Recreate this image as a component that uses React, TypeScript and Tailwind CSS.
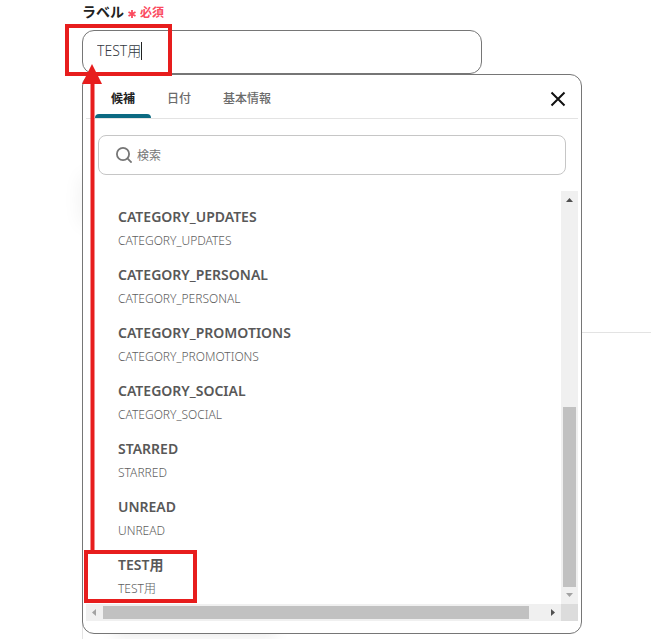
import { useState } from 'react';

const options = [
  "CATEGORY_UPDATES",
  "CATEGORY_PERSONAL",
  "CATEGORY_PROMOTIONS",
  "CATEGORY_SOCIAL",
  "STARRED",
  "UNREAD",
  "TEST用"
];

const tabs = ["候補", "日付", "基本情報"];

const SearchIcon = () => (
  <svg className="w-4 h-4 shrink-0" viewBox="0 0 16 16" fill="none" stroke="#767676" strokeWidth="1.8" aria-hidden="true">
    <circle cx="7" cy="7" r="6.1" />
    <path d="M11.200 11.200 15.600 15.600" />
  </svg>
);

const CloseIcon = () => (
  <svg className="w-4 h-4" viewBox="0 0 16 16" fill="none" stroke="#111111" strokeWidth="2" aria-hidden="true">
    <path d="M1.5 1.5 14.5 14.5M14.5 1.5 1.5 14.5" />
  </svg>
);

const VerticalScrollbar = () => (
  <div className="w-[17px] shrink-0 bg-[#f0f0f0] flex flex-col items-center">
    <svg className="w-[17px] h-[17px]" viewBox="0 0 17 17" fill="#505050"><path d="M5 11h7L8.500 7z" /></svg>
    <div className="grow" />
    <div className="w-[13px] h-[180px] bg-[#c1c1c1]" />
    <svg className="w-[17px] h-[17px]" viewBox="0 0 17 17" fill="#a3a3a3"><path d="M5 6h7l-3.500 4z" /></svg>
  </div>
);

const HorizontalScrollbar = () => (
  <div className="flex h-[17px] items-center bg-[#f0f0f0]">
    <svg className="w-[17px] h-[17px]" viewBox="0 0 17 17" fill="#a3a3a3"><path d="M10 5v7L6 8.500z" /></svg>
    <div className="grow h-[13px] bg-[#c1c1c1]" />
    <div className="w-[15px]" />
    <svg className="w-[17px] h-[17px]" viewBox="0 0 17 17" fill="#505050"><path d="M7 5v7l4-3.500z" /></svg>
    <div className="w-[17px] h-[17px] bg-[#dcdcdc]" />
  </div>
);

const App = () => {
  const [value, setValue] = useState("TEST用");
  const [activeTab, setActiveTab] = useState("候補");

  return (
    <main className="relative overflow-hidden bg-white pl-[82px] pr-[69px] pt-1 pb-[5px] font-['Noto_Sans','Noto_Sans_CJK_JP',sans-serif]">
      {/* Page behind the popup */}
      <div className="absolute left-[86px] top-[180px] w-2 h-10 shadow-[0_0_20px_4px_rgba(0,0,0,0.07)]" />
      <div className="absolute left-[120px] top-[622px] w-[150px] h-2 shadow-[0_0_16px_6px_rgba(0,0,0,0.09)]" />
      <div className="absolute right-0 top-[332px] w-20 h-px bg-[#e3e3e3]" />
      <div className="absolute left-[82px] bottom-0 w-px h-4 bg-[#e3e3e3]" />

      <div className="flex items-center gap-1 h-4 mb-[10px] leading-4">
        <label htmlFor="label-field" className="text-sm leading-4 font-semibold text-[#222222]">ラベル</label>
        <svg className="w-2 h-2 mt-1" viewBox="0 0 8 8" stroke="#fb4b5f" strokeWidth="1.800" aria-hidden="true">
          <path d="M4 0v8M.5 2l7 4M7.500 2l-7 4" />
        </svg>
        <span className="pt-0.5 text-xs leading-4 font-bold text-[#fb4b5f]">必須</span>
      </div>

      <div className="flex items-center max-w-[400px] h-11 pl-[14px] pb-0.5 border border-[#767676] rounded-xl bg-white">
        <input
          id="label-field"
          type="text"
          value={value}
          onChange={(e) => setValue(e.target.value)}
          className="[field-sizing:content] text-sm leading-5 font-light text-[#333840] outline-none"
        />
        <span className="w-px h-[18px] bg-[#222222]" />
      </div>

      <section className="relative flex flex-col bg-white border border-[#767676] rounded-xl pl-[3px] pr-[3px] pb-3">
        <div className="flex justify-between h-11 pl-[9px] pr-2 border-b border-[#e3e3e3]">
          <div role="tablist" className="flex">
            {tabs.map((tab) => (
              <button
                key={tab}
                type="button"
                role="tab"
                aria-selected={tab === activeTab}
                onClick={() => setActiveTab(tab)}
                className={`relative px-4 pt-1 text-xs leading-4 ${tab === activeTab ? 'font-bold text-[#222222]' : 'font-medium text-[#6b6b6b]'}`}
              >
                {tab}
                {tab === activeTab && <span className="absolute left-0 bottom-0 w-full h-1 rounded-t bg-[#0b6a82]" />}
              </button>
            ))}
          </div>
          <button type="button" aria-label="閉じる" className="flex items-center justify-center w-6 pt-1">
            <CloseIcon />
          </button>
        </div>

        <div className="flex items-center gap-[5px] h-10 mt-4 mb-4 ml-3 mr-3 px-[17px] border border-[#c6c6c6] rounded-lg">
          <SearchIcon />
          <input
            type="search"
            aria-label="検索"
            placeholder="検索"
            className="grow min-w-0 pt-0.5 text-xs leading-4 outline-none placeholder:text-[#767676]"
          />
        </div>

        <div className="flex">
          <ul className="grow pt-[7px] pl-8">
            {options.map((option) => (
              <li key={option} className="flex flex-col gap-1 pt-[9px] pb-[5px]">
                <span className="text-sm leading-5 font-semibold text-[#585858]">{option}</span>
                <span className="text-xs leading-5 font-light text-[#606060]">{option}</span>
              </li>
            ))}
          </ul>
          <VerticalScrollbar />
        </div>
        <HorizontalScrollbar />
      </section>

      {/* Annotation: the selected option is inserted in the field */}
      <div className="absolute left-[65px] top-[24px] w-[107px] h-[52px] border-4 border-[#e71d1d]" />
      <div className="absolute left-[84px] top-[550px] w-[113px] h-[53px] border-4 border-[#e71d1d]" />
      <svg className="absolute left-[82px] top-[64px] w-5 h-[488px]" viewBox="0 0 20 488" fill="#e71d1d" aria-hidden="true">
        <path d="M10 0 20 20H12.500V488H8.500V20H0z" />
      </svg>
    </main>
  );
};

export default App;
